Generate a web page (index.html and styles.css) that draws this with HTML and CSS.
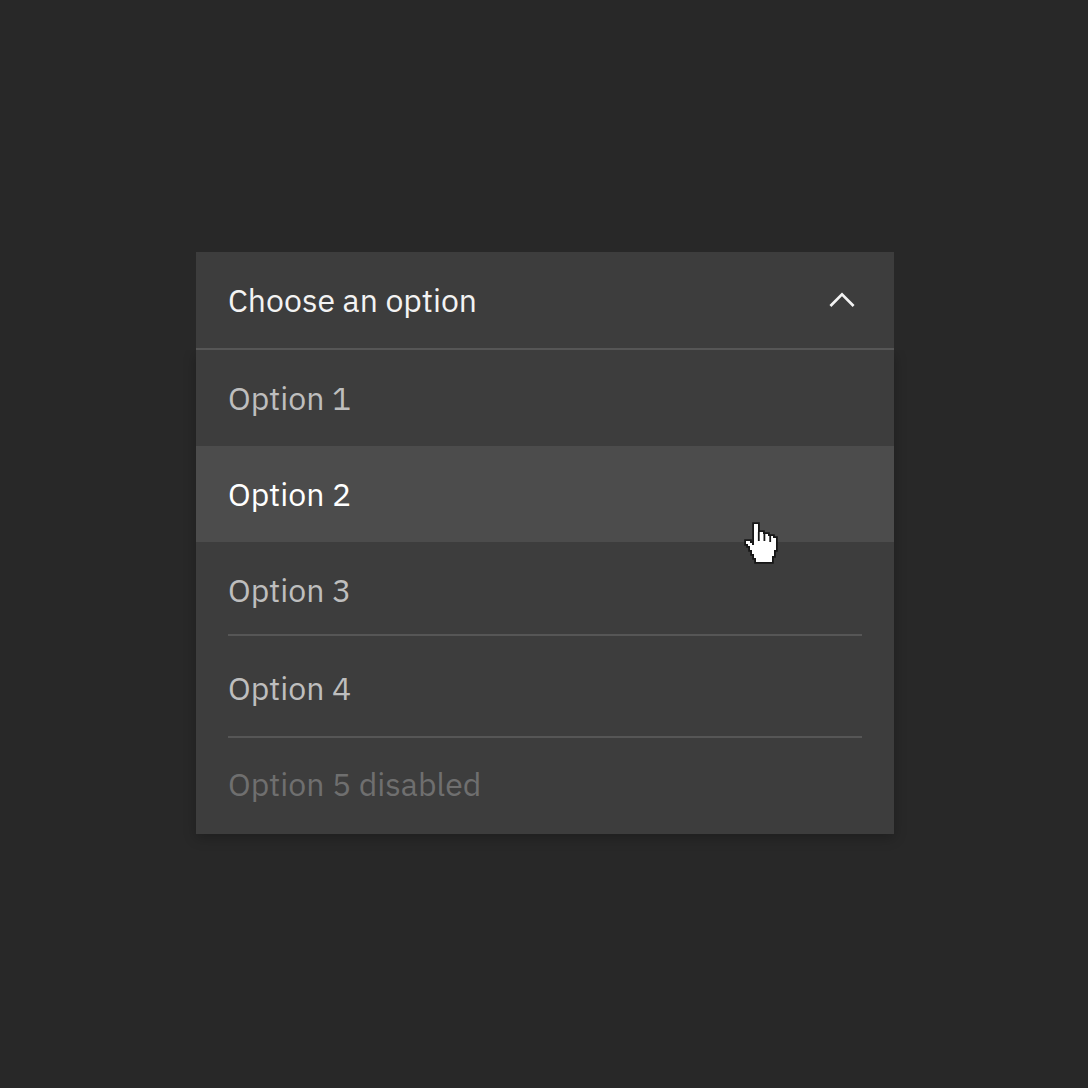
FILE: index.html
```html
<!DOCTYPE html>
<html lang="en">
<head>
<meta charset="utf-8">
<title>Dropdown</title>
<link rel="stylesheet" href="styles.css">
</head>
<body>
<div class="dropdown">
  <div class="field">
    <span class="title">Choose an option</span>
    <svg class="chevron" width="28" height="18" viewBox="0 0 28 18"><path d="M2.4 15 14 3.4 25.6 15" fill="none" stroke="#f3f3f3" stroke-width="2.7"/></svg>
  </div>
  <ul class="menu">
    <li class="option"><span>Option 1</span></li>
    <li class="option hover"><span>Option 2</span></li>
    <li class="option third ruled"><span>Option 3</span></li>
    <li class="option fourth ruled"><span>Option 4</span></li>
    <li class="option disabled"><span>Option 5 disabled</span></li>
  </ul>
</div>
<svg class="cursor" width="36" height="46" viewBox="0 0 36 46"><path d="M10 4h4v8h5v2h5v2h5v2h3v12h-2v6h-2v6h-16v-4h-2v-4h-2v-4h-2v-4h-2v-2h-2v-3h4v2h2v2h2z" fill="#171717" stroke="#171717" stroke-width="3.6"/><path d="M10 4h4v8h5v2h5v2h5v2h3v12h-2v6h-2v6h-16v-4h-2v-4h-2v-4h-2v-4h-2v-2h-2v-3h4v2h2v2h2z" fill="#fff"/><path d="M14.8 12v9M20.4 14v7M26.2 16v6" stroke="#171717" stroke-width="1.8"/></svg>
</body>
</html>
```
FILE: styles.css
```css
* { box-sizing: border-box; }
body {
  margin: 0;
  height: 1088px;
  padding: 252px 194px 0 196px;
  background: #282828;
  color: #f3f3f3;
  font: 32px/40px "IBM Plex Sans", "Noto Sans", sans-serif;
}
.dropdown { width: 698px; }
.field {
  display: flex;
  align-items: center;
  justify-content: space-between;
  height: 98px;
  padding: 0 38px 0 32px;
  background: #3d3d3d;
  border-bottom: 2px solid #565656;
}
.chevron { display: block; }
.menu {
  margin: 0;
  padding: 0;
  list-style: none;
  height: 484px;
  background: #3d3d3d;
  box-shadow: 0 4px 12px rgba(0, 0, 0, 0.24);
  clip-path: inset(0 -24px -24px -24px);
}
.option {
  display: flex;
  align-items: center;
  height: 96px;
  padding: 0 32px;
  color: #bebebe;
}
.hover { background: #4c4c4c; color: #fff; }
.ruled { height: auto; flex-direction: column; align-items: stretch; }
.ruled::after { content: ""; height: 2px; background: #565656; }
.third span { padding: 28px 0 24px; }
.fourth span { padding: 32px 0 28px; }
.disabled { height: 92px; color: #6f6f6f; }
.cursor { position: absolute; left: 744px; top: 520px; }
```
